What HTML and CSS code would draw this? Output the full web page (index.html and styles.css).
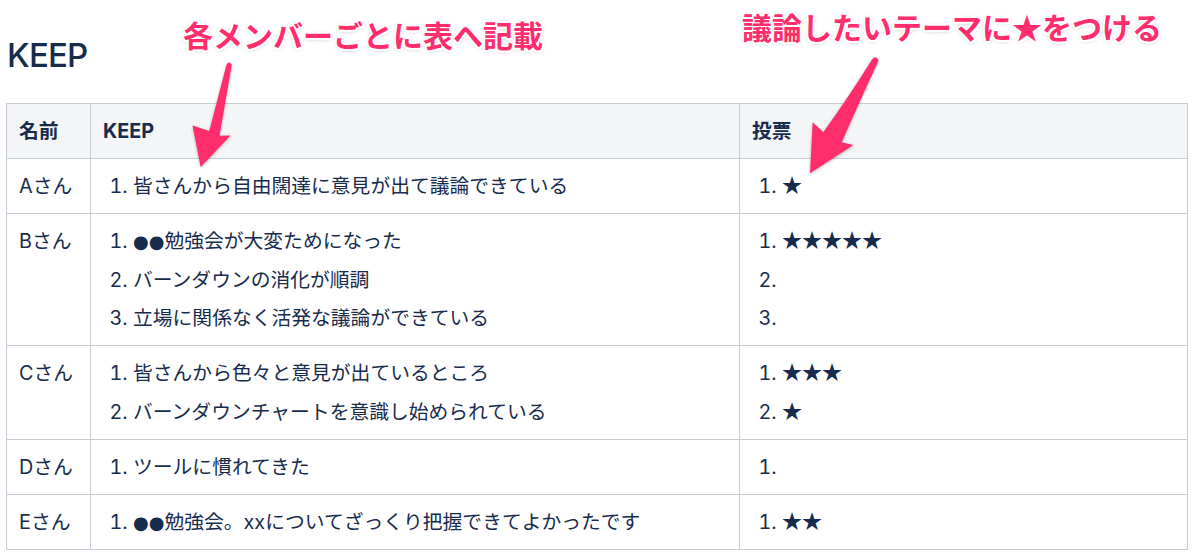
FILE: index.html
```html
<!DOCTYPE html>
<html lang="ja">
<head>
    <meta charset="UTF-8">
    <title>KEEP</title>
    <link rel="stylesheet" href="styles.css">
</head>
<body>
<div class="page">
    <h1 class="title">KEEP</h1>

    <table class="keep">
        <thead>
        <tr>
            <th class="col-name">名前</th>
            <th class="col-keep">KEEP</th>
            <th class="col-vote">投票</th>
        </tr>
        </thead>
        <tbody>
        <tr>
            <td>Aさん</td>
            <td><ol><li>皆さんから自由闊達に意見が出て議論できている</li></ol></td>
            <td><ol><li><span class="star">★</span></li></ol></td>
        </tr>
        <tr>
            <td>Bさん</td>
            <td><ol>
                <li><span class="dot">●●</span>勉強会が大変ためになった</li>
                <li>バーンダウンの消化が順調</li>
                <li>立場に関係なく活発な議論ができている</li>
            </ol></td>
            <td><ol><li><span class="star">★★★★★</span></li><li></li><li></li></ol></td>
        </tr>
        <tr>
            <td>Cさん</td>
            <td><ol>
                <li>皆さんから色々と意見が出ているところ</li>
                <li>バーンダウンチャートを意識し始められている</li>
            </ol></td>
            <td><ol><li><span class="star">★★★</span></li><li><span class="star">★</span></li></ol></td>
        </tr>
        <tr>
            <td>Dさん</td>
            <td><ol><li>ツールに慣れてきた</li></ol></td>
            <td><ol><li></li></ol></td>
        </tr>
        <tr>
            <td>Eさん</td>
            <td><ol><li><span class="dot">●●</span>勉強会。xxについてざっくり把握できてよかったです</li></ol></td>
            <td><ol><li><span class="star">★★</span></li></ol></td>
        </tr>
        </tbody>
    </table>

    <!-- annotations -->
    <p class="note note-1">各メンバーごとに表へ記載</p>
    <p class="note note-2">議論したいテーマに★をつける</p>
    <svg class="arrows" width="1200" height="560" viewBox="0 0 1200 560">
        <path d="M226.6 64.5 Q229 60.5 231.8 64.5 L219.5 135.8 L230.5 135.5 L200.7 167 L192.5 125.5 L209.3 131 Z"/>
        <path d="M872.3 59 Q876 55 878.6 60.5 Q858 105 841.7 142.3 L853.3 145 L810 173.3 L812.7 122.3 L823.3 132.3 Q850 95 872.3 59 Z"/>
    </svg>
</div>
</body>
</html>
```

FILE: styles.css
```css
body{
    margin: 0;
    background: #fff;
    color: #172b4d;
    font-family: Inter, "Noto Sans CJK JP", sans-serif;
}
.page{
    position: relative;
    width: 1200px;
    height: 560px;
    padding: 35px 6px 0;
    box-sizing: border-box;
    overflow: hidden;
}
.title{
    margin: 0 0 28px 1px;
    font-size: 33px;
    line-height: 40px;
    font-weight: 500;
    letter-spacing: -0.8px;
}
.keep{
    width: 1182px;
    border-collapse: collapse;
    font-size: 19.8px;
    line-height: 28px;
}
.keep th,
.keep td{
    border: 1px solid #c6cbd4;
    padding: 13px 12px;
    text-align: left;
    vertical-align: top;
}
.keep th{
    background-color: #f4f5f7;
    font-weight: 700;
}
.col-name{ width: 59px; }
.col-keep{ width: 624px; }
.keep ol{
    margin: 0;
    padding-left: 30px;
}
.keep li + li{
    margin-top: 10.5px;
}
.dot{
    font-family: "DejaVu Sans", sans-serif;
    font-size: 18px;
    line-height: 20px;
}
.star{
    font-family: "Noto Sans CJK JP", sans-serif;
    font-size: 20px;
    line-height: 20px;
}

.note{
    position: absolute;
    margin: 0;
    font-family: "Noto Sans CJK JP", sans-serif;
    font-size: 30px;
    line-height: 30px;
    font-weight: 700;
    color: #ff2d6c;
    white-space: nowrap;
    text-shadow:
        2px 0 0 #fff, -2px 0 0 #fff, 0 2px 0 #fff, 0 -2px 0 #fff,
        1.5px 1.5px 0 #fff, -1.5px 1.5px 0 #fff, 1.5px -1.5px 0 #fff, -1.5px -1.5px 0 #fff,
        0 1px 4px rgba(0,0,0,.35);
}
.note-1{ left: 183px; top: 19px; }
.note-2{ left: 742px; top: 11px; }
.arrows{
    position: absolute;
    left: 0;
    top: 0;
    pointer-events: none;
}
.arrows path{
    fill: #ff2d6c;
    filter: drop-shadow(0 1px 1.5px rgba(0,0,0,.3));
}
```
